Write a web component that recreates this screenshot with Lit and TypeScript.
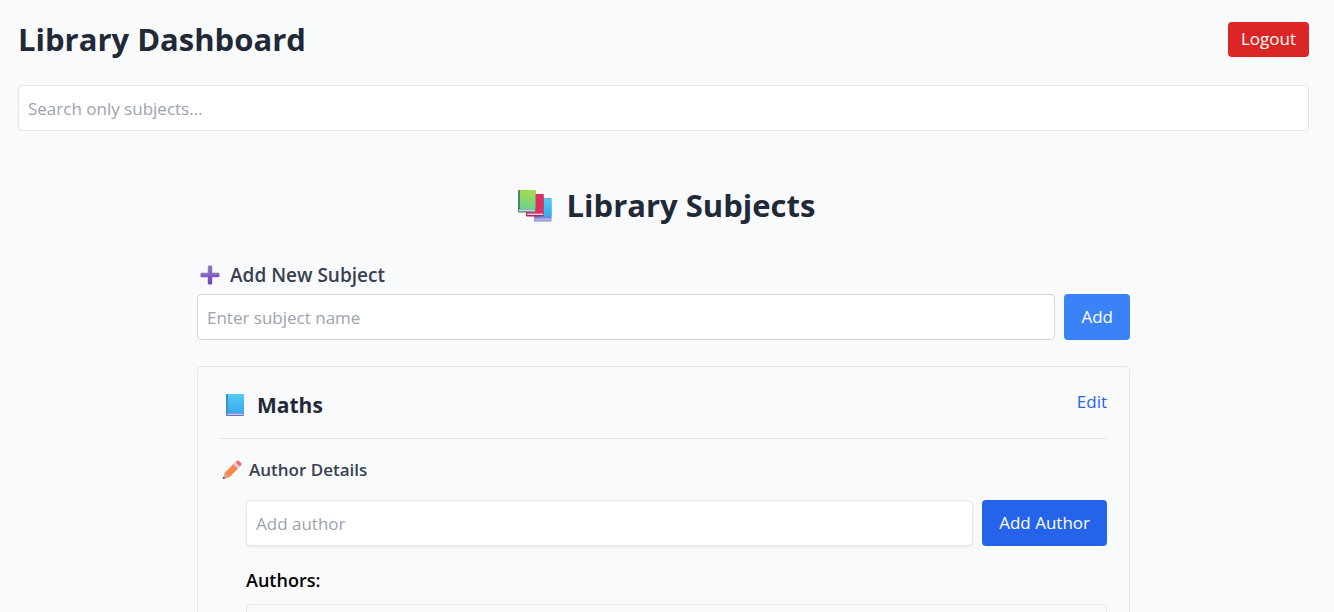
import { LitElement, html, css } from "lit";
import { customElement, state } from "lit/decorators.js";

const booksIcon = html`<svg class="icon-books" viewBox="1 0 34 32" aria-hidden="true">
  <defs>
    <linearGradient id="bg" x1="0" y1="0" x2="0" y2="1"><stop offset="0" stop-color="#a5dc50" /><stop offset="1" stop-color="#6fd28c" /></linearGradient>
    <linearGradient id="bb" x1="0" y1="0" x2="0" y2="1"><stop offset="0" stop-color="#55cdf2" /><stop offset="1" stop-color="#38a7f0" /></linearGradient>
  </defs>
  <rect x="17" y="8" width="17.500" height="23.500" rx="1" fill="#7c86d4" />
  <rect x="19" y="8.500" width="15.500" height="18.500" rx="1" fill="url(#bb)" />
  <rect x="17.500" y="28.500" width="16.500" height="2" fill="#b4b4ec" />
  <rect x="9" y="4" width="17.500" height="22.500" rx="1" fill="#b81f5b" />
  <rect x="11" y="4" width="15.500" height="19" rx="1" fill="#e0305f" />
  <rect x="10" y="23.500" width="16" height="1.500" fill="#e9c6ea" />
  <rect x="1" y="0" width="17.500" height="22.500" rx="1" fill="#438a68" />
  <rect x="3" y="0" width="15.500" height="19" rx="1" fill="url(#bg)" />
  <rect x="2" y="19.500" width="16" height="1.800" fill="#d3d5f3" />
</svg>`;

const plusIcon = html`<svg class="icon-plus" viewBox="0 0 20 20" aria-hidden="true">
  <defs><linearGradient id="pl" x1="0" y1="0" x2="0" y2="1"><stop offset="0" stop-color="#8b74bd" /><stop offset="1" stop-color="#7445bd" /></linearGradient></defs>
  <path d="M9 .5h2q1.200 0 1.200 1.200v6.100h6.100q1.200 0 1.200 1.200v2q0 1.200-1.200 1.200h-6.100v6.100q0 1.200-1.200 1.200H9q-1.200 0-1.200-1.200v-6.100H1.700Q.5 12.200.5 11V9q0-1.200 1.200-1.200h6.100V1.700Q7.800.5 9 .5z" fill="url(#pl)" />
  <path d="M1.500 9h7.500V1.500M11.500 9h7" stroke="#a08dcd" stroke-width=".8" fill="none" />
</svg>`;

const bookIcon = html`<svg class="icon-book" viewBox="0 0 20 22" aria-hidden="true">
  <defs><linearGradient id="bk" x1="0" y1="0" x2="0" y2="1"><stop offset="0" stop-color="#54cdf1" /><stop offset="1" stop-color="#3aa7ef" /></linearGradient></defs>
  <rect x="1" y="0" width="18" height="22" rx="1" fill="#5c79c7" />
  <rect x="1" y="0" width="3" height="19" rx="1" fill="#3d92c7" />
  <rect x="3" y="0" width="16" height="19" rx=".6" fill="url(#bk)" />
  <rect x="2.500" y="19.600" width="16" height="1.300" fill="#d3ceff" />
</svg>`;

const pencilIcon = html`<svg class="icon-pencil" viewBox="0 0 20 20" aria-hidden="true">
  <defs><linearGradient id="pn" x1="0" y1="0" x2="1" y2="1"><stop offset="0" stop-color="#f2764a" /><stop offset=".5" stop-color="#fb8b45" /><stop offset="1" stop-color="#e86339" /></linearGradient></defs>
  <path d="M3 12.500L12 3.600l4.500 4.500-9 9L1 19z" fill="url(#pn)" />
  <path d="M3 12.500l4.500 4.600L1 19z" fill="#dfa486" />
  <path d="M1.700 16.600L3.400 18.300 1 19q-.7 0-.4-.7z" fill="#756068" />
  <path d="M11.300 4.300l2.500-2.500 4.500 4.500-2.500 2.500z" fill="#dfccdf" />
  <path d="M13.500 2.100L15 .8q1-.8 2 .1L19.200 3q.8 1 0 2L17.900 6.500z" fill="#ee6a70" />
</svg>`;

@customElement("app-root")
export class AppRoot extends LitElement {
  @state() private subjects = ["Maths"];

  static styles = css`
    :host {
      display: block;
      min-height: 100vh;
      background: #f9fafc;
      color: #000;
      font: 17px/26px "Open Sans", "Noto Sans", sans-serif;
    }
    * { box-sizing: border-box; }
    svg { display: block; flex: none; }
    h1, h2, h3, h4 { margin: 0; }
    .page { padding: 18px 25px 0 18px; }
    .top {
      display: flex;
      align-items: center;
      justify-content: space-between;
      margin-bottom: 24px;
    }
    .title {
      font-size: 31px;
      line-height: 43px;
      font-weight: 700;
      color: #1f2937;
    }
    input, button { font: inherit; }
    button {
      border: 0;
      border-radius: 4px;
      color: #fff;
      white-space: nowrap;
      cursor: pointer;
    }
    input {
      display: block;
      width: 100%;
      min-width: 0;
      flex: 1;
      height: 46px;
      padding: 0 9px;
      border: 1px solid #e5e7eb;
      border-radius: 4px;
      background: #fff;
      color: #1f2937;
    }
    input::placeholder { color: #9ca3af; opacity: 1; }
    .logout { padding: 4px 13px 5px; background: #dc2626; }
    .content { max-width: 933px; margin: 53px auto 0; }
    .section-title {
      display: flex;
      align-items: center;
      justify-content: center;
      gap: 15px;
      padding-left: 6px;
      margin-bottom: 35px;
    }
    .label {
      display: flex;
      align-items: center;
      gap: 10px;
      padding-left: 3px;
      margin-bottom: 6px;
      font-size: 19px;
      font-weight: 600;
      color: #374151;
    }
    .row { display: flex; gap: 9px; }
    .strong { border-color: #d1d5db; }
    .shadow { box-shadow: 0 1px 2px rgb(0 0 0 / 8%); }
    .add { padding: 0 17px; background: #3b82f6; }
    .add-author { padding: 0 17px; background: #2563eb; }
    .card {
      margin-top: 26px;
      padding: 22px;
      border: 1px solid #e5e7eb;
      border-radius: 4px;
    }
    .card-head {
      display: flex;
      justify-content: space-between;
      align-items: flex-start;
      height: 50px;
      border-bottom: 1px solid #e5e7eb;
    }
    .subject {
      display: flex;
      align-items: center;
      gap: 12px;
      padding-left: 5px;
      font-size: 21px;
      line-height: 32px;
      font-weight: 700;
      color: #1f2937;
    }
    .edit { padding: 0; background: none; color: #2563eb; }
    .details {
      display: flex;
      align-items: center;
      gap: 7px;
      padding-left: 2px;
      margin: 18px 0 17px;
      font-weight: 600;
      color: #374151;
    }
    .authors { padding-left: 26px; }
    .authors-title { margin: 21px 0 11px; font-size: 18px; font-weight: 600; }
    .list {
      min-height: 64px;
      margin: 0;
      padding: 0;
      list-style: none;
      border: 1px solid #e5e7eb;
      border-radius: 4px;
    }
    .icon-books { width: 34px; height: 32px; }
    .icon-plus { width: 20px; height: 20px; }
    .icon-book { width: 20px; height: 22px; }
    .icon-pencil { width: 20px; height: 20px; }
  `;

  private addSubject(event: Event) {
    event.preventDefault();
    const form = event.target as HTMLFormElement;
    const name = String(new FormData(form).get("subject") ?? "").trim();
    if (!name) return;
    this.subjects = [...this.subjects, name];
    form.reset();
  }

  private renderSubject(name: string) {
    return html`<section class="card">
      <div class="card-head">
        <h3 class="subject">${bookIcon}<span>${name}</span></h3>
        <button class="edit" type="button">Edit</button>
      </div>
      <h4 class="details">${pencilIcon}<span>Author Details</span></h4>
      <div class="authors">
        <div class="row">
          <input class="shadow" type="text" placeholder="Add author" aria-label="Add author" />
          <button class="add-author" type="button">Add Author</button>
        </div>
        <h4 class="authors-title">Authors:</h4>
        <ul class="list"></ul>
      </div>
    </section>`;
  }

  render() {
    return html`<div class="page">
      <header class="top">
        <h1 class="title">Library Dashboard</h1>
        <button class="logout" type="button">Logout</button>
      </header>
      <input type="search" placeholder="Search only subjects..." aria-label="Search only subjects" />
      <main class="content">
        <h2 class="title section-title">${booksIcon}<span>Library Subjects</span></h2>
        <form @submit=${this.addSubject}>
          <label class="label" for="subject">${plusIcon}<span>Add New Subject</span></label>
          <div class="row">
            <input class="strong" id="subject" name="subject" type="text" placeholder="Enter subject name" />
            <button class="add" type="submit">Add</button>
          </div>
        </form>
        ${this.subjects.map((name) => this.renderSubject(name))}
      </main>
    </div>`;
  }
}
